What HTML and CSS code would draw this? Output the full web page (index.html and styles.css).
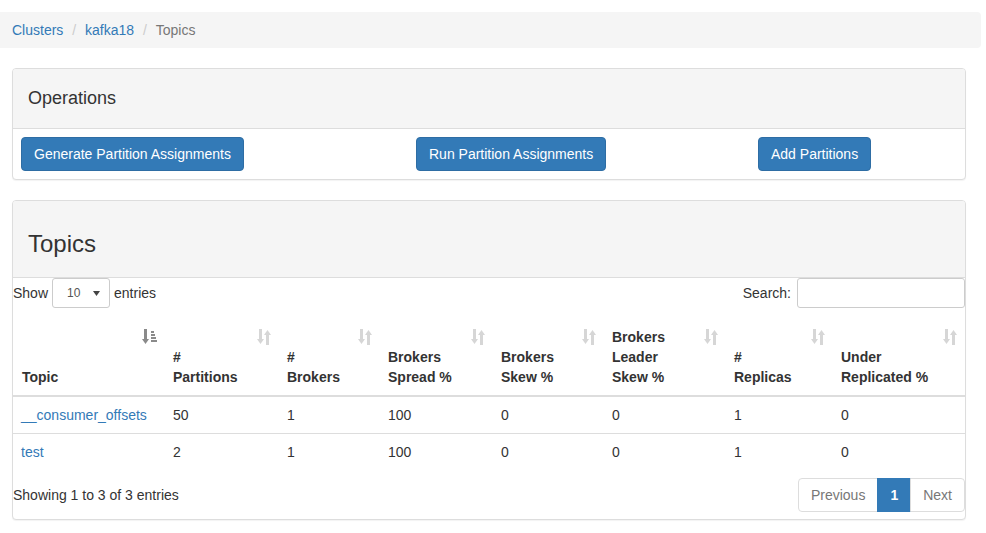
FILE: index.html
```html
<!DOCTYPE html>
<html lang="en">
<head>
<meta charset="utf-8">
<title>Topics</title>
<link rel="stylesheet" href="styles.css">
</head>
<body>
<ol class="breadcrumb">
  <li><a href="#">Clusters</a></li>
  <li><a href="#">kafka18</a></li>
  <li class="active">Topics</li>
</ol>

<div class="panel">
  <div class="panel-heading ops-heading"><h4>Operations</h4></div>
  <div class="ops-body">
    <div><button class="btn">Generate Partition Assignments</button></div>
    <div><button class="btn">Run Partition Assignments</button></div>
    <div><button class="btn">Add Partitions</button></div>
  </div>
</div>

<div class="panel">
  <div class="panel-heading topics-heading"><h3>Topics</h3></div>
  <div class="dt-top">
    <div class="dt-length">
      <span>Show</span>
      <span class="select"><span>10</span><svg width="7" height="5" viewBox="0 0 7 5"><polygon points="0,0 7,0 3.5,5" fill="#444"/></svg></span>
      <span>entries</span>
    </div>
    <div class="dt-search">
      <span>Search:</span>
      <span class="input"></span>
    </div>
  </div>
  <table class="table">
    <colgroup>
      <col style="width:152px"><col style="width:114px"><col style="width:101px"><col style="width:113px">
      <col style="width:111px"><col style="width:122px"><col style="width:107px"><col style="width:132px">
    </colgroup>
    <thead>
      <tr>
        <th>Topic<svg class="sort" width="15" height="16" viewBox="0 0 15 16"><rect x="2" y="0" width="3" height="11" fill="#8a8a8a"/><polygon points="0,10 7,10 3.5,15" fill="#8a8a8a"/><rect x="9" y="2" width="3" height="2" fill="#8a8a8a"/><rect x="9" y="5" width="4" height="2" fill="#8a8a8a"/><rect x="9" y="8" width="5" height="2" fill="#8a8a8a"/><rect x="9" y="11" width="6" height="2" fill="#8a8a8a"/></svg></th>
        <th>#<br>Partitions<svg class="sort" width="14" height="16" viewBox="0 0 14 16"><rect x="2" y="0" width="3" height="11" fill="#d6d6d6"/><polygon points="0,10 7,10 3.5,15" fill="#d6d6d6"/><polygon points="7,6 14,6 10.5,1" fill="#d6d6d6"/><rect x="9" y="5" width="3" height="11" fill="#d6d6d6"/></svg></th>
        <th>#<br>Brokers<svg class="sort" width="14" height="16" viewBox="0 0 14 16"><rect x="2" y="0" width="3" height="11" fill="#d6d6d6"/><polygon points="0,10 7,10 3.5,15" fill="#d6d6d6"/><polygon points="7,6 14,6 10.5,1" fill="#d6d6d6"/><rect x="9" y="5" width="3" height="11" fill="#d6d6d6"/></svg></th>
        <th>Brokers<br>Spread %<svg class="sort" width="14" height="16" viewBox="0 0 14 16"><rect x="2" y="0" width="3" height="11" fill="#d6d6d6"/><polygon points="0,10 7,10 3.5,15" fill="#d6d6d6"/><polygon points="7,6 14,6 10.5,1" fill="#d6d6d6"/><rect x="9" y="5" width="3" height="11" fill="#d6d6d6"/></svg></th>
        <th>Brokers<br>Skew %<svg class="sort" width="14" height="16" viewBox="0 0 14 16"><rect x="2" y="0" width="3" height="11" fill="#d6d6d6"/><polygon points="0,10 7,10 3.5,15" fill="#d6d6d6"/><polygon points="7,6 14,6 10.5,1" fill="#d6d6d6"/><rect x="9" y="5" width="3" height="11" fill="#d6d6d6"/></svg></th>
        <th>Brokers<br>Leader<br>Skew %<svg class="sort" width="14" height="16" viewBox="0 0 14 16"><rect x="2" y="0" width="3" height="11" fill="#d6d6d6"/><polygon points="0,10 7,10 3.5,15" fill="#d6d6d6"/><polygon points="7,6 14,6 10.5,1" fill="#d6d6d6"/><rect x="9" y="5" width="3" height="11" fill="#d6d6d6"/></svg></th>
        <th>#<br>Replicas<svg class="sort" width="14" height="16" viewBox="0 0 14 16"><rect x="2" y="0" width="3" height="11" fill="#d6d6d6"/><polygon points="0,10 7,10 3.5,15" fill="#d6d6d6"/><polygon points="7,6 14,6 10.5,1" fill="#d6d6d6"/><rect x="9" y="5" width="3" height="11" fill="#d6d6d6"/></svg></th>
        <th>Under<br>Replicated %<svg class="sort" width="14" height="16" viewBox="0 0 14 16"><rect x="2" y="0" width="3" height="11" fill="#d6d6d6"/><polygon points="0,10 7,10 3.5,15" fill="#d6d6d6"/><polygon points="7,6 14,6 10.5,1" fill="#d6d6d6"/><rect x="9" y="5" width="3" height="11" fill="#d6d6d6"/></svg></th>
      </tr>
    </thead>
    <tbody>
      <tr>
        <td><a href="#">__consumer_offsets</a></td><td>50</td><td>1</td><td>100</td><td>0</td><td>0</td><td>1</td><td>0</td>
      </tr>
      <tr>
        <td><a href="#">test</a></td><td>2</td><td>1</td><td>100</td><td>0</td><td>0</td><td>1</td><td>0</td>
      </tr>
    </tbody>
  </table>
  <div class="dt-bottom">
    <div class="dt-info">Showing 1 to 3 of 3 entries</div>
    <ul class="pagination">
      <li class="disabled"><a href="#">Previous</a></li>
      <li class="active"><a href="#">1</a></li>
      <li class="disabled"><a href="#">Next</a></li>
    </ul>
  </div>
</div>
</body>
</html>
```

FILE: styles.css
```css
* { box-sizing: border-box; }

body {
  margin: 0;
  font-family: "Liberation Sans", Arial, Helvetica, sans-serif;
  font-size: 14px;
  line-height: 20px;
  color: #333;
  background: #fff;
}

a { color: #337ab7; text-decoration: none; }

.breadcrumb {
  list-style: none;
  margin: 12px 0 20px 0;
  padding: 8px 12px;
  width: 981px;
  background: #f5f5f5;
  border-radius: 0 4px 4px 0;
}
.breadcrumb li { display: inline-block; }
.breadcrumb li + li::before {
  content: "/\00a0";
  padding: 0 5px;
  color: #ccc;
}
.breadcrumb .active { color: #777; }

.panel {
  width: 954px;
  margin: 0 0 20px 12px;
  border: 1px solid #ddd;
  border-radius: 4px;
  background: #fff;
  box-shadow: 0 1px 1px rgba(0,0,0,0.05);
  overflow: hidden;
}
.panel-heading {
  background: #f5f5f5;
  border-bottom: 1px solid #ddd;
  padding: 0 15px;
  display: flex;
  align-items: center;
}
.panel-heading h4, .panel-heading h3 {
  margin: 0;
  font-weight: 400;
  color: #333;
}
.ops-heading { height: 60px; padding-bottom: 1px; }
.ops-heading h4 { font-size: 18px; line-height: 20px; }
.topics-heading { height: 77px; padding-top: 10px; }
.topics-heading h3 { font-size: 24px; line-height: 26px; }

.ops-body {
  padding: 8px;
  display: grid;
  grid-template-columns: 395px 342px 1fr;
}
.btn {
  font-family: inherit;
  font-size: 14px;
  line-height: 20px;
  padding: 6px 12px;
  color: #fff;
  background: #337ab7;
  border: 1px solid #2e6da4;
  border-radius: 4px;
  cursor: pointer;
}

.dt-top {
  display: flex;
  justify-content: space-between;
  align-items: center;
  height: 30px;
}
.dt-length, .dt-search {
  display: flex;
  align-items: center;
  gap: 4px;
}
.select {
  width: 58px;
  height: 30px;
  border: 1px solid #ccc;
  border-radius: 3px;
  display: flex;
  align-items: center;
  justify-content: space-between;
  padding: 0 9px 0 14px;
  font-size: 12px;
  color: #555;
}
.dt-search { gap: 6px; }
.input {
  display: block;
  width: 168px;
  height: 30px;
  border: 1px solid #ccc;
  border-radius: 3px;
}

.table {
  width: 952px;
  table-layout: fixed;
  border-collapse: collapse;
  margin-top: 11px;
}
.table th {
  position: relative;
  text-align: left;
  vertical-align: bottom;
  font-weight: 700;
  padding: 8px;
  border-bottom: 2px solid #ddd;
  white-space: nowrap;
}
.table th:first-child { padding-left: 9px; }
.table th .sort {
  position: absolute;
  top: 10px;
  right: 8px;
}
.table td {
  padding: 8px;
  border-top: 1px solid #ddd;
  white-space: nowrap;
}

.dt-bottom {
  display: flex;
  justify-content: space-between;
  align-items: center;
  padding: 8px 0 7px 0;
}
.pagination {
  list-style: none;
  margin: 0;
  padding: 0;
  display: flex;
}
.pagination li a {
  display: block;
  padding: 6px 12px;
  line-height: 20px;
  border: 1px solid #ddd;
  margin-left: -1px;
  color: #337ab7;
  background: #fff;
}
.pagination li:first-child a { margin-left: 0; border-radius: 4px 0 0 4px; }
.pagination li:last-child a { border-radius: 0 4px 4px 0; }
.pagination .disabled a { color: #777; }
.pagination .active a {
  background: #337ab7;
  border-color: #337ab7;
  color: #fff;
  font-weight: 700;
}
```
